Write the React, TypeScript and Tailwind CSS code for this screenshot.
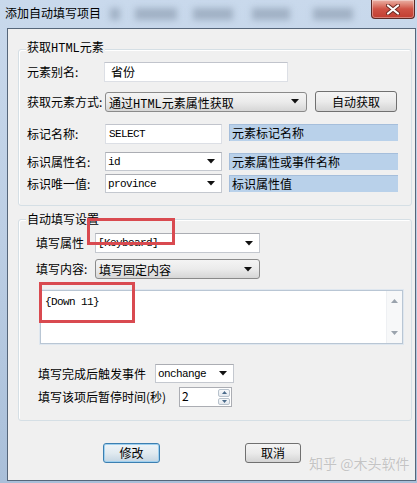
import React from 'react';

const cjk = "font-['Noto_Sans_CJK_SC',sans-serif] text-[12px] leading-[16px] text-black";
const mixed = "font-['Liberation_Mono','Noto_Sans_CJK_SC',monospace] text-[12px] leading-[16px] text-black";
const mono = "font-['Liberation_Mono','Noto_Sans_CJK_SC',monospace] text-[11px] tracking-[-0.6px] leading-[14px] text-black";

function Arrow() {
  return (
    <svg width="8" height="5" viewBox="0 0 8 5" className="shrink-0">
      <polygon points="0,0 8,0 4,4.5" fill="#111" />
    </svg>
  );
}

function Combo({ text, className }: { text: string; className: string }) {
  return (
    <div className={`h-full bg-white border border-[#c4c8cf] border-t-[#abadb3] flex items-center pl-[2px] pr-[6px] ${className}`}>
      <span className={`${mono} flex-1`}>{text}</span>
      <Arrow />
    </div>
  );
}

function DropList({ text, className }: { text: React.ReactNode; className: string }) {
  return (
    <div className={`h-full rounded-[3px] border border-[#8a8a8a] bg-gradient-to-b from-[#f4f4f4] via-[#ebebeb] to-[#d6d6d6] flex items-center pl-[3px] pr-[7px] ${className}`}>
      <span className="flex-1">{text}</span>
      <Arrow />
    </div>
  );
}

function Hint({ text }: { text: string }) {
  return (
    <div className={`ml-[7px] w-[169px] h-[17px] bg-[#b9d1ea] border-t border-l border-[#a5bedb] flex items-center pl-[2px] ${cjk} text-[#1a1f2a]`}>
      {text}
    </div>
  );
}

export default function App() {
  return (
    <div className="relative w-[417px] h-[483px] overflow-hidden bg-gradient-to-b from-[#c9d9ec] via-[#bccee4] to-[#a9bfd9]">
      {/* blurred background seen through the glass title bar */}
      <div className="absolute left-[110px] top-[8px] w-[10px] h-[12px] bg-[#8797ab]/60 blur-[3px]" />
      <div className="absolute left-[135px] top-[8px] w-[42px] h-[12px] bg-[#8797ab]/60 blur-[3px]" />
      <div className="absolute left-[193px] top-[8px] w-[40px] h-[12px] bg-[#8797ab]/60 blur-[3px]" />
      <div className="absolute left-[252px] top-[8px] w-[38px] h-[12px] bg-[#8797ab]/60 blur-[3px]" />
      <div className="absolute left-[313px] top-[8px] w-[40px] h-[12px] bg-[#8797ab]/60 blur-[3px]" />

      <div className="relative flex flex-col h-full">
        {/* title bar */}
        <div className="h-[28px] flex items-start">
          <span className={`${cjk} pl-[5px] pt-[5px] text-[#101010]`}>添加自动填写项目</span>
          <div className="ml-auto mr-[2px] w-[44px] h-[19px] rounded-b-[4px] border border-t-0 border-[#5b2a26] bg-gradient-to-b from-[#e9b1a6] via-[#cf5245] to-[#c13d30] shadow-[inset_0_0_0_1px_rgba(255,255,255,0.35)] flex items-center justify-center">
            <svg width="14" height="11" viewBox="0 0 14 11">
              <path d="M2 1.5 L12 9.5 M12 1.5 L2 9.5" stroke="#6b2a22" strokeWidth="4" strokeLinecap="round" />
              <path d="M2 1.5 L12 9.5 M12 1.5 L2 9.5" stroke="#fff" strokeWidth="2.2" strokeLinecap="round" />
            </svg>
          </div>
        </div>

        {/* client area */}
        <div className="ml-[7px] mr-[1px] h-[453px] border border-[#56667a] bg-[#f0f0f0] flex flex-col">
          {/* group 1 */}
          <div className="ml-[10px] mr-[3px] mt-[20px] border border-[#d5dfe5] rounded-[3px] shadow-[inset_1px_1px_0_#ffffff] pb-[12px]">
            <div className={`-mt-[9px] ml-[7px] px-[1px] w-fit bg-[#f0f0f0] ${mixed}`}>获取HTML元素</div>
            <div className="pl-[8px] flex flex-col">
              <div className="mt-[5px] h-[20px] flex items-center">
                <span className={`w-[77px] ${cjk}`}>元素别名:</span>
                <div className={`w-[184px] h-full bg-white border border-[#dcdfe5] border-t-[#c1c4cc] flex items-center pl-[6px] ${cjk}`}>省份</div>
              </div>
              <div className="mt-[9px] h-[21px] flex items-center">
                <span className={`w-[78px] ${cjk}`}>获取元素方式:</span>
                <DropList className="w-[202px] !h-[20px]" text={<span className={mixed}>通过HTML元素属性获取</span>} />
                <button className={`ml-[8px] w-[82px] h-[21px] rounded-[3px] border border-[#707070] bg-gradient-to-b from-[#f4f4f4] via-[#ebebeb] to-[#d4d4d4] ${cjk}`}>自动获取</button>
              </div>
              <div className="mt-[12px] h-[20px] flex items-start">
                <span className={`w-[78px] mt-[2px] ${cjk}`}>标记名称:</span>
                <div className={`w-[117px] h-full bg-white border border-[#dcdfe5] border-t-[#c1c4cc] flex items-center pl-[3px] ${mono}`}>SELECT</div>
                <Hint text="元素标记名称" />
              </div>
              <div className="mt-[8px] h-[19px] flex items-center">
                <span className={`w-[78px] ${cjk}`}>标识属性名:</span>
                <Combo className="w-[117px]" text="id" />
                <Hint text="元素属性或事件名称" />
              </div>
              <div className="mt-[3px] h-[19px] flex items-center">
                <span className={`w-[78px] ${cjk}`}>标识唯一值:</span>
                <Combo className="w-[117px]" text="province" />
                <Hint text="标识属性值" />
              </div>
            </div>
          </div>

          {/* group 2 */}
          <div className="ml-[10px] mr-[3px] mt-[13px] border border-[#d5dfe5] rounded-[3px] shadow-[inset_1px_1px_0_#ffffff] pb-[13px]">
            <div className={`-mt-[9px] ml-[7px] px-[1px] w-fit bg-[#f0f0f0] ${cjk}`}>自动填写设置</div>
            <div className="pl-[17px] flex flex-col">
              <div className="mt-[6px] h-[20px] flex items-center">
                <span className={`w-[59px] ${cjk}`}>填写属性</span>
                <Combo className="w-[165px]" text="[Keyboard]" />
              </div>
              <div className="mt-[6px] h-[20px] flex items-center">
                <span className={`w-[59px] ${cjk}`}>填写内容:</span>
                <DropList className="w-[165px]" text={<span className={cjk}>填写固定内容</span>} />
              </div>
              <div className="mt-[11px] ml-[4px] w-[363px] h-[54px] bg-white border border-[#b9c6d4] shadow-[0_0_0_1px_#dfe7ef] flex">
                <div className={`flex-1 pl-[4px] pt-[4px] ${mono}`}>{'{Down 11}'}</div>
                <div className="w-[16px] border-l border-[#eef0f3] bg-[#f7f8f9] flex flex-col items-center justify-between py-[8px]">
                  <svg width="7" height="4" viewBox="0 0 7 4"><polygon points="0,4 7,4 3.5,0" fill="#9aa3ad" /></svg>
                  <svg width="7" height="4" viewBox="0 0 7 4"><polygon points="0,0 7,0 3.5,4" fill="#9aa3ad" /></svg>
                </div>
              </div>
              <div className="mt-[20px] pl-[2px] h-[19px] flex items-center">
                <span className={`w-[117px] ${cjk}`}>填写完成后触发事件</span>
                <Combo className="w-[79px]" text="onchange" />
              </div>
              <div className="mt-[4px] pl-[2px] h-[20px] flex items-center">
                <span className={`w-[141px] ${cjk}`}>填写该项后暂停时间(秒)</span>
                <div className="w-[53px] h-full bg-white border border-[#abadb3] flex">
                  <span className={`flex-1 pl-[2px] ${cjk}`}>2</span>
                  <div className="w-[14px] flex flex-col gap-[1px] p-[1px]">
                    <div className="flex-1 border border-[#b8c2cc] rounded-[2px] bg-gradient-to-b from-[#f7f9fb] to-[#e3e8ee] flex items-center justify-center">
                      <svg width="5" height="3" viewBox="0 0 5 3"><polygon points="0,3 5,3 2.5,0" fill="#4a6a8a" /></svg>
                    </div>
                    <div className="flex-1 border border-[#b8c2cc] rounded-[2px] bg-gradient-to-b from-[#f7f9fb] to-[#e3e8ee] flex items-center justify-center">
                      <svg width="5" height="3" viewBox="0 0 5 3"><polygon points="0,0 5,0 2.5,3" fill="#4a6a8a" /></svg>
                    </div>
                  </div>
                </div>
              </div>
            </div>
          </div>

          {/* buttons */}
          <div className="mt-[22px] flex">
            <button className={`ml-[95px] w-[57px] h-[20px] rounded-[3px] border border-[#3c7fb1] bg-gradient-to-b from-[#eef4f8] via-[#e1eaf0] to-[#c4d5e2] shadow-[inset_0_0_0_1px_#9fd0ef] ${cjk}`}>修改</button>
            <button className={`ml-[85px] w-[56px] h-[20px] rounded-[3px] border border-[#707070] bg-gradient-to-b from-[#f4f4f4] via-[#ebebeb] to-[#d4d4d4] ${cjk}`}>取消</button>
          </div>
        </div>
      </div>

      {/* annotations */}
      <div className="absolute left-[87px] top-[218px] w-[88px] h-[27px] border-[3px] border-[#d94a50]" />
      <div className="absolute left-[39px] top-[282px] w-[96px] h-[41px] border-[3px] border-[#d94a50]" />
      <div className="absolute left-[309px] top-[454px] font-['Noto_Sans_CJK_SC',sans-serif] text-[14px] leading-[18px] text-[#c4c4c4] [text-shadow:0_0_1px_#fff]">知乎 @木头软件</div>
    </div>
  );
}
